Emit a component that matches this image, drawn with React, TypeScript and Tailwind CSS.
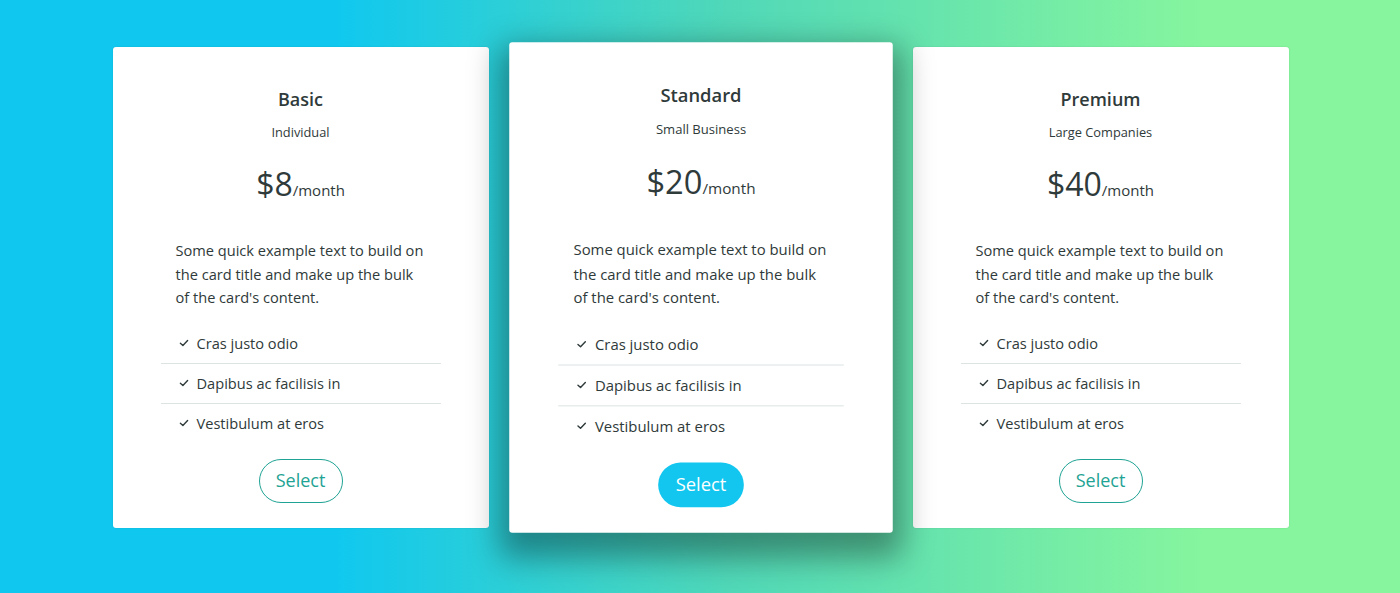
import React from "react";

interface Plan {
  name: string;
  audience: string;
  price: string;
  featured?: boolean;
}

const plans: Plan[] = [
  { name: "Basic", audience: "Individual", price: "$8" },
  { name: "Standard", audience: "Small Business", price: "$20", featured: true },
  { name: "Premium", audience: "Large Companies", price: "$40" },
];

const features = ["Cras justo odio", "Dapibus ac facilisis in", "Vestibulum at eros"];

function CheckMark() {
  return (
    <svg width="10" height="8" viewBox="0 0 10 8" className="shrink-0">
      <path d="M1.4 4.3 L3.9 6.5 L8.6 1.6" fill="none" stroke="#2f3a3a" strokeWidth="1.4" strokeLinecap="round" strokeLinejoin="round" />
    </svg>
  );
}

function PlanCard({ plan }: { plan: Plan }) {
  return (
    <div
      className={
        plan.featured
          ? "relative z-10 w-[376px] rounded-[3px] bg-white px-12 pt-[39px] pb-[25px] scale-[1.02] shadow-[0_14px_30px_10px_rgba(0,0,0,0.36)]"
          : "w-[376px] rounded-[3px] bg-white px-12 pt-[39px] pb-[25px] shadow-[0_0_2px_rgba(0,0,0,0.12)]"
      }
    >
      <div className="text-center">
        <h3 className="text-[18px] leading-[27px] font-semibold text-[#2f3a3a]">{plan.name}</h3>
        <p className="mt-[9px] text-[12.8px] leading-[20px] text-[#2f3a3a]">{plan.audience}</p>
        <p className="mt-[22px] leading-[40px] text-[#2f3a3a]">
          <span className="text-[32px] font-medium">{plan.price}</span>
          <span className="text-[15px]">/month</span>
        </p>
      </div>

      <p className="ml-[15px] mt-[29px] w-[252px] text-[14.6px] leading-[23.5px] text-[#2f3a3a]">
        Some quick example text to build on the card title and make up the bulk of the card's content.
      </p>

      <ul className="mt-[14px] divide-y divide-[#dde3e3]">
        {features.map((f) => (
          <li key={f} className="flex items-center gap-[8px] py-[9px] pl-[18px] text-[14.6px] leading-[21px] text-[#2f3a3a]">
            <CheckMark />
            {f}
          </li>
        ))}
      </ul>

      <div className="mt-[16px] flex justify-center">
        {plan.featured ? (
          <button className="h-[44px] w-[84px] rounded-full bg-[#12c6ef] text-[18px] text-white">Select</button>
        ) : (
          <button className="h-[44px] w-[84px] rounded-full border border-[#1fa394] bg-white text-[18px] text-[#1fa394]">
            Select
          </button>
        )}
      </div>
    </div>
  );
}

export default function App() {
  return (
    <div
      className="flex h-screen items-start justify-center gap-6 pl-px pt-[47px] bg-[linear-gradient(90deg,#10c8ef_24%,#50d8b8_52%,#86f59e_86%)]"
      style={{ fontFamily: '"Open Sans", "Noto Sans", sans-serif' }}
    >
      {plans.map((p) => (
        <PlanCard key={p.name} plan={p} />
      ))}
    </div>
  );
}
